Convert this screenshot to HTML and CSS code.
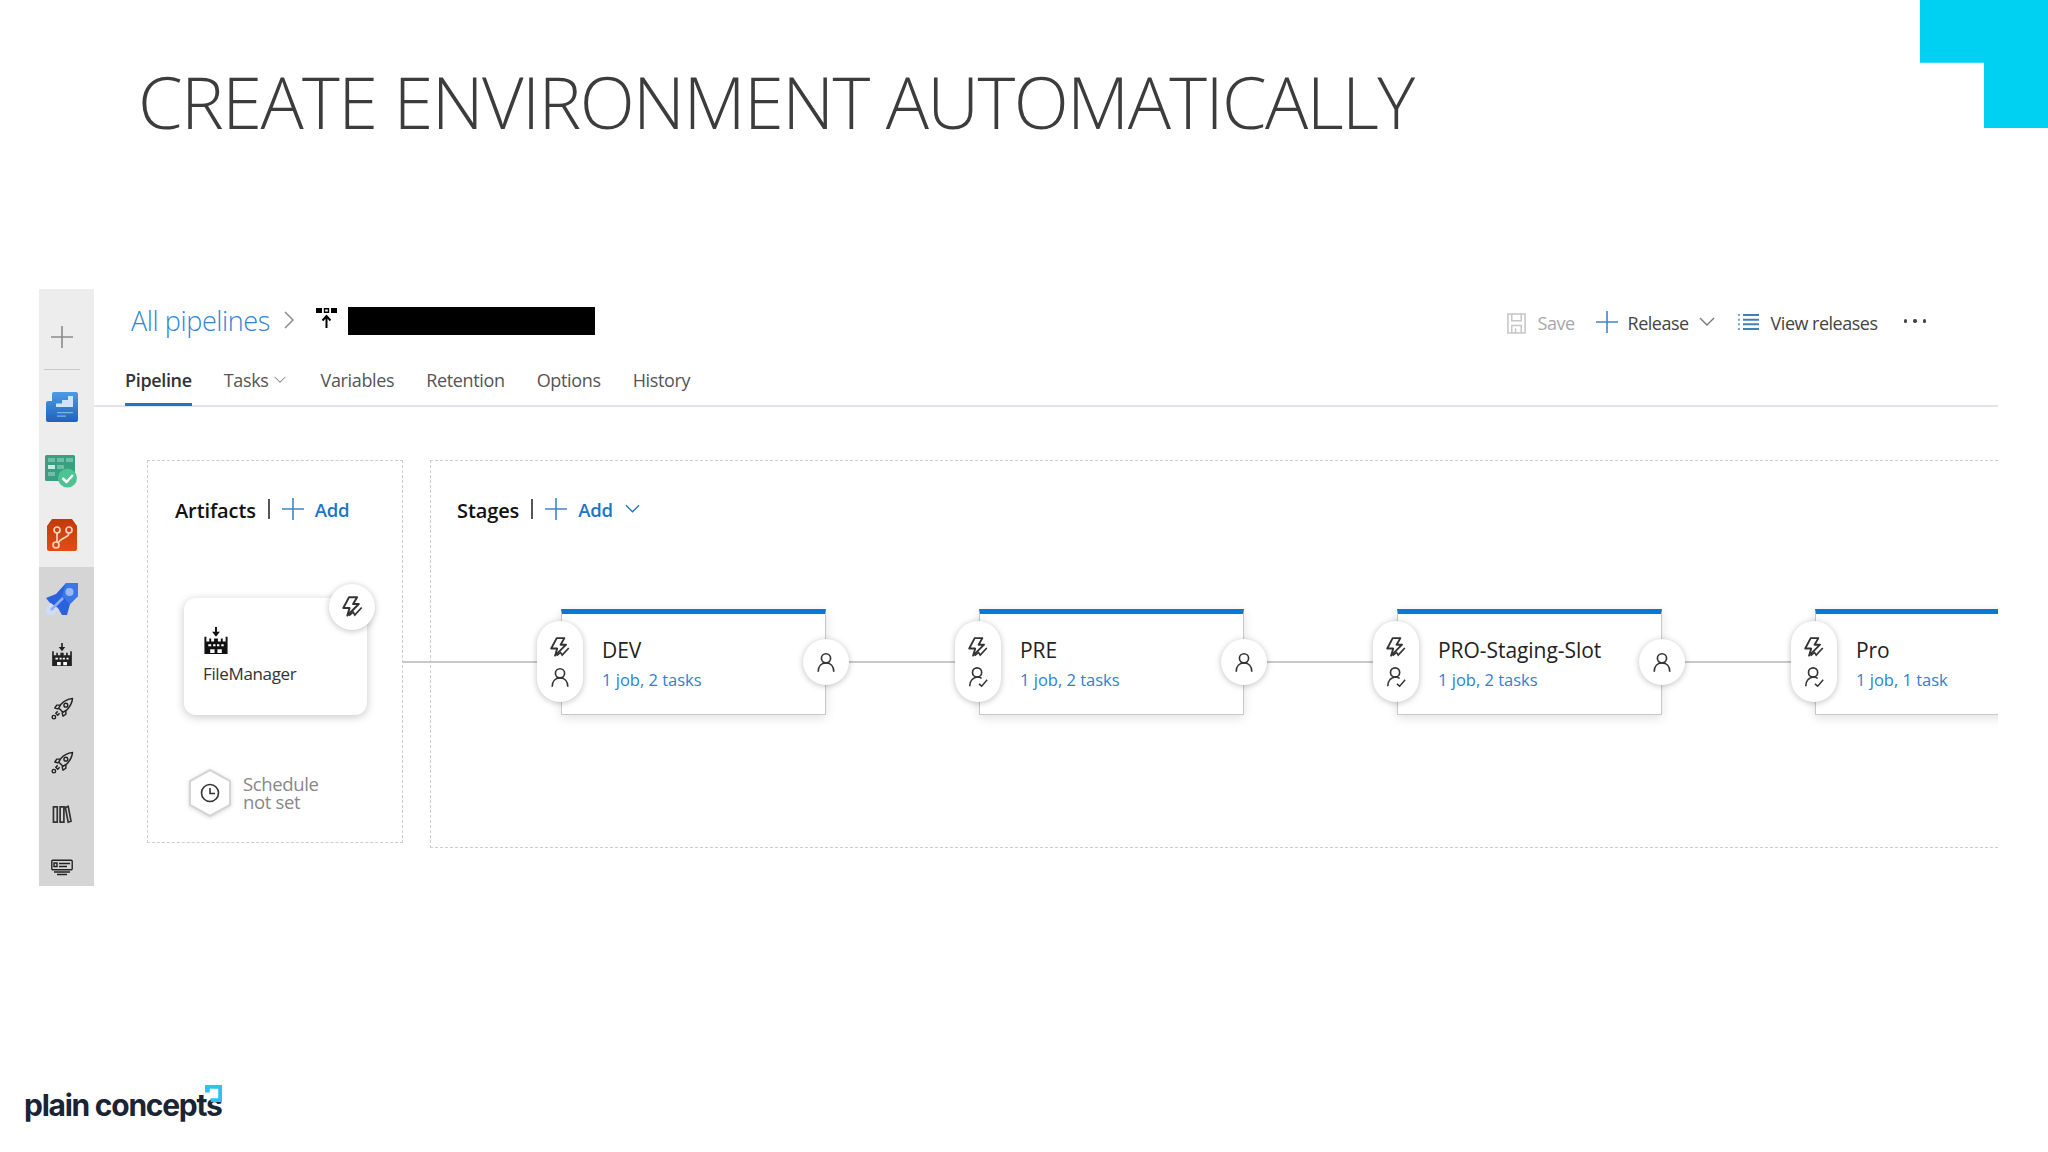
FILE: index.html
```html
<!DOCTYPE html>
<html lang="en">
<head>
<meta charset="utf-8">
<title>Create environment automatically</title>
<link rel="stylesheet" href="styles.css">
</head>
<body>
<svg class="defs" width="0" height="0" aria-hidden="true">
  <symbol id="bolt" viewBox="3.500 1 20 20"><path d="M10.500 2h7l-3.500 6h5L9 18l2-6.500H5.500z" fill="none" stroke="currentColor" stroke-width="1.700" stroke-linejoin="round"/><path d="M10.500 18l3.500-3 1.500 2.500 6-6.500" fill="none" stroke="currentColor" stroke-width="1.500"/></symbol>
  <symbol id="person" viewBox="0 0 24 24"><circle cx="12" cy="8" r="5" fill="none" stroke="currentColor" stroke-width="1.800"/><path d="M3.500 22.500c0-6 3.500-9.500 8.500-9.500s8.500 3.500 8.500 9.500" fill="none" stroke="currentColor" stroke-width="1.800"/></symbol>
  <symbol id="personcheck" viewBox="0 0 24 24"><circle cx="11" cy="7" r="5" fill="none" stroke="currentColor" stroke-width="1.800"/><path d="M3 22c0-5 2.500-9 8-10 2 0 3.500.5 5 1.500" fill="none" stroke="currentColor" stroke-width="1.800"/><path d="M13 19.500l3 2.500 6-7" fill="none" stroke="currentColor" stroke-width="1.600"/></symbol>
  <symbol id="factory" viewBox="0 0 24 28"><path d="M11 0h2v5h3l-4 5-4-5h3z" fill="currentColor"/><path d="M0 10h2v5h3v-3h2v3h3v-3h4v3h3v-3h2v3h3v-5h2v18H0z" fill="currentColor"/><path d="M4 18h3v2H4zM9 18h2.500v2H9zM13 18h2.500v2H13zM17.500 18H20v2h-2.500zM6 23h4.500v4H6zM13.500 23H18v4h-4.500z" fill="#fff"/></symbol>
  <symbol id="rocket" viewBox="0 0 24 24"><g fill="none" stroke="currentColor" stroke-width="1.500" stroke-linejoin="round"><path d="M22.500 1.500c-5 .5-9 2.500-12 6l-2.500 4 4.500 4.500 4-2.500c3.500-3.500 5.500-7.500 6-12z"/><circle cx="15.500" cy="8.500" r="2"/><path d="M9.500 8.500H6l-2 3 4 1M15.500 14.500V18l-3 2-1-4M7 15l-2 2 2 2 2-2"/><circle cx="3" cy="21" r="1.800"/></g></symbol>
  <symbol id="books" viewBox="0 0 20 20"><g fill="none" stroke="currentColor" stroke-width="1.800"><path d="M1 2h4v16H1zM8 2h4v16H8zM13.500 2.500l3-1 3 15.500-3 1z"/></g></symbol>
  <symbol id="monitor" viewBox="0 0 22 16"><g fill="none" stroke="currentColor" stroke-width="1.400"><rect x=".8" y=".8" width="20.400" height="9.500" rx="1"/><path d="M3 3.500h3v3.500H3zM8 4h11M8 7h8M3 12.500h16M6 15h10"/></g></symbol>
  <symbol id="plus" viewBox="0 0 22 22"><path d="M11 0v22M0 11h22" fill="none" stroke="currentColor" stroke-width="1.600"/></symbol>
  <symbol id="chev" viewBox="0 0 16 10"><path d="M1 1l7 7 7-7" fill="none" stroke="currentColor" stroke-width="1.400"/></symbol>
  <linearGradient id="ovgrad" x1="0" y1="0" x2="0" y2="1"><stop offset="0" stop-color="#4c9be6"/><stop offset="1" stop-color="#1f62bd"/></linearGradient>
  <linearGradient id="rpgrad" x1="0" y1="0" x2="0" y2="1"><stop offset="0" stop-color="#c23a0a"/><stop offset="1" stop-color="#e04d14"/></linearGradient>
</svg>

<div class="corner"></div>

<h1 class="title">CREATE ENVIRONMENT AUTOMATICALLY</h1>

<section class="app">
  <nav class="rail">
    <svg class="ri-plus"><use href="#plus"/></svg>
    <span class="rail-sep"></span>
    <svg class="ri-color ri-overview" viewBox="0 0 32 30"><path d="M2 9h4V2a2 2 0 0 1 2-2h22a2 2 0 0 1 2 2v26a2 2 0 0 1-2 2H2a2 2 0 0 1-2-2V11a2 2 0 0 1 2-2z" fill="url(#ovgrad)"/><path d="M10 15h17V4h-5v4h-6v3.500h-6z" fill="#cfe4f7"/><path d="M11 20h16v1.200H11zM11 23.500h9v1.200h-9z" fill="#7fb2e6"/></svg>
    <svg class="ri-color ri-boards" viewBox="0 0 32 33"><rect width="30" height="26" rx="1.500" fill="#3a9f80"/><path d="M3 3h7v4H3zM12 3h7v4h-7zM21 3h7v4h-7zM12 10h7v4h-7zM3 17h7v4H3z" fill="#6dbfa5"/><path d="M3 10h7v4H3z" fill="#c9ebdf"/><circle cx="22.500" cy="23" r="9.500" fill="#4cc492"/><path d="M17.500 23l4 4 6.500-7" fill="none" stroke="#fff" stroke-width="2.500"/></svg>
    <svg class="ri-color ri-repos" viewBox="0 0 30 32"><path d="M5 0h20l5 7v23a2 2 0 0 1-2 2H2a2 2 0 0 1-2-2V7z" fill="url(#rpgrad)"/><g fill="none" stroke="#f9d3bd" stroke-width="1.700"><circle cx="10" cy="11" r="3"/><circle cx="22" cy="11" r="3"/><circle cx="9" cy="26" r="3"/><path d="M10 14v9M22 14c0 5-8 4-11 10"/></g></svg>
    <div class="rail-active">
      <svg class="ri-color ri-pipes" viewBox="0 0 32 32"><path d="M0 15l10-4L20 0h12v13l-8 8-3 11h-5l-4-7-8-5z" fill="#2a62de"/><path d="M20 0h12v13l-8 8-8-8z" fill="#3a78ea"/><circle cx="23.500" cy="9" r="4" fill="#9cb8f2"/><path d="M0 24l5-4 7 7-5 5H2l-2-2z" fill="#d0dbf7"/><path d="M5 27l12-12" stroke="#8fadf0" stroke-width="2.500" fill="none"/></svg>
      <svg class="ri-dark ri-factory"><use href="#factory"/></svg>
      <svg class="ri-dark ri-rocket"><use href="#rocket"/></svg>
      <svg class="ri-dark ri-rocket"><use href="#rocket"/></svg>
      <svg class="ri-dark ri-books"><use href="#books"/></svg>
      <svg class="ri-dark ri-monitor"><use href="#monitor"/></svg>
    </div>
  </nav>

  <div class="main">
    <header class="top">
      <a class="crumb">All pipelines</a>
      <svg class="crumb-chev" viewBox="0 0 10 18"><path d="M1 1l8 8-8 8" fill="none" stroke="currentColor" stroke-width="1.500"/></svg>
      <svg class="crumb-icon" viewBox="0 0 21 20"><path d="M0 0h6v5H0zM15 0h6v5h-6z" fill="#000"/><path d="M8.500.7h4v3.600h-4z" fill="none" stroke="#000" stroke-width="1.400"/><path d="M10.500 20V9M6.500 12.500l4-4.500 4 4.500" fill="none" stroke="#000" stroke-width="2"/></svg>
      <span class="redacted"></span>
      <div class="actions">
        <span class="act act-save">
          <svg class="a-save" viewBox="0 0 20 22"><g fill="none" stroke="currentColor" stroke-width="1.600"><path d="M1 1h18v20H1z"/><path d="M5 1v7h10V1M5 21v-8h10v8M9 16v5"/></g></svg>
          Save
        </span>
        <span class="act act-release">
          <svg class="a-plus"><use href="#plus"/></svg>
          Release
          <svg class="a-chev"><use href="#chev"/></svg>
        </span>
        <span class="act act-view">
          <svg class="a-list" viewBox="0 0 21 16"><path d="M5 1h16M5 5.700h16M5 10.300h16M5 15h16" stroke="#3f80b8" stroke-width="2" fill="none"/><path d="M0 1h2M0 5.700h2M0 10.300h2M0 15h2" stroke="#7aa8cf" stroke-width="2" fill="none"/></svg>
          View releases
        </span>
        <span class="dots"><i></i><i></i><i></i></span>
      </div>
    </header>

    <div class="tabs">
      <span class="tab tab-on">Pipeline</span>
      <span class="tab tab-tasks">Tasks<svg class="t-chev"><use href="#chev"/></svg></span>
      <span class="tab">Variables</span>
      <span class="tab">Retention</span>
      <span class="tab">Options</span>
      <span class="tab">History</span>
    </div>

    <div class="canvas">
      <div class="panel artifacts">
        <div class="panel-head">
          <strong>Artifacts</strong><i class="bar"></i>
          <svg class="h-plus"><use href="#plus"/></svg><b class="add">Add</b>
        </div>
        <div class="art-card">
          <svg class="art-icon"><use href="#factory"/></svg>
          <span class="art-name">FileManager</span>
          <span class="trigger"><svg><use href="#bolt"/></svg></span>
        </div>
        <div class="schedule">
          <svg class="hex" viewBox="0 0 42 48"><path d="M21 1l20 11v24L21 47 1 36V12z" fill="#fff" stroke="#d4d4d4" stroke-width="2"/><circle cx="21" cy="24" r="8.500" fill="none" stroke="#333" stroke-width="1.600"/><path d="M21 19v5.500h5" fill="none" stroke="#333" stroke-width="1.600"/></svg>
          <span class="sched-text">Schedule<br>not set</span>
        </div>
      </div>

      <div class="panel stages">
        <div class="panel-head">
          <strong>Stages</strong><i class="bar"></i>
          <svg class="h-plus"><use href="#plus"/></svg><b class="add">Add</b>
          <svg class="h-chev"><use href="#chev"/></svg>
        </div>
        <div class="track">
          <i class="link link-first"></i>
          <div class="stage">
            <span class="pill"><svg><use href="#bolt"/></svg><svg><use href="#person"/></svg></span>
            <span class="stage-name">DEV</span>
            <a class="stage-sub">1 job, 2 tasks</a>
            <span class="post"><svg><use href="#person"/></svg></span>
          </div>
          <i class="link"></i>
          <div class="stage">
            <span class="pill"><svg><use href="#bolt"/></svg><svg><use href="#personcheck"/></svg></span>
            <span class="stage-name">PRE</span>
            <a class="stage-sub">1 job, 2 tasks</a>
            <span class="post"><svg><use href="#person"/></svg></span>
          </div>
          <i class="link"></i>
          <div class="stage">
            <span class="pill"><svg><use href="#bolt"/></svg><svg><use href="#personcheck"/></svg></span>
            <span class="stage-name">PRO-Staging-Slot</span>
            <a class="stage-sub">1 job, 2 tasks</a>
            <span class="post"><svg><use href="#person"/></svg></span>
          </div>
          <i class="link"></i>
          <div class="stage">
            <span class="pill"><svg><use href="#bolt"/></svg><svg><use href="#personcheck"/></svg></span>
            <span class="stage-name">Pro</span>
            <a class="stage-sub">1 job, 1 task</a>
          </div>
        </div>
      </div>
    </div>
  </div>
</section>

<footer class="brand">
  <span class="brand-name">plain concepts</span>
  <svg class="brand-mark" viewBox="0 0 18 18"><path d="M0 0h18v18H6v-4h8V4H5v4H0z" fill="#2cc4ee"/></svg>
</footer>
</body>
</html>
```
FILE: styles.css
```css
* { box-sizing: border-box; }
html, body { margin: 0; padding: 0; }
body {
  position: relative;
  width: 2048px;
  height: 1152px;
  overflow: hidden;
  background: #fff;
  color: #333;
  font-family: "Open Sans", "Noto Sans", "Liberation Sans", sans-serif;
}
svg { display: block; flex: none; }
.defs { position: absolute; }
i { font-style: normal; }

.corner {
  position: absolute;
  top: 0;
  right: 0;
  width: 128px;
  height: 128px;
  background: #00d1f2;
  clip-path: polygon(0 0, 100% 0, 100% 100%, 50% 100%, 50% 49%, 0 49%);
}

.title {
  margin: 0;
  height: 289px;
  padding: 49px 0 0 138px;
  font-size: 72px;
  line-height: 104px;
  font-weight: 300;
  color: #3c3c3c;
  letter-spacing: -1.6px;
  white-space: nowrap;
}

.app { display: flex; height: 597px; margin: 0 50px 0 39px; }

.rail {
  width: 55px;
  display: flex;
  flex-direction: column;
  align-items: center;
  padding-right: 9px;
  background: #ededed;
}
.ri-plus { width: 22px; height: 22px; margin-top: 37px; color: #8a8a8a; }
.rail-sep { width: 36px; height: 1px; margin-top: 21px; background: #c9c9c9; }
.ri-color { margin-left: -2px; }
.ri-overview { width: 32px; height: 30px; margin-top: 22px; margin-left: 0; }
.ri-boards { width: 32px; height: 33px; margin-top: 33px; }
.ri-repos { width: 30px; height: 32px; margin-top: 31px; margin-left: 0; }
.rail-active {
  flex: 1;
  align-self: stretch;
  margin: 16px -9px 0 0;
  padding-right: 9px;
  display: flex;
  flex-direction: column;
  align-items: center;
  background: #d5d5d5;
}
.ri-pipes { width: 32px; height: 32px; margin-top: 16px; margin-left: 0; }
.ri-dark { color: #222; }
.ri-factory { width: 20px; height: 23px; margin-top: 28px; }
.ri-rocket { width: 23px; height: 23px; margin-top: 31px; }
.ri-books { width: 20px; height: 19px; margin-top: 31px; color: #333; }
.ri-monitor { width: 22px; height: 17px; margin-top: 35px; }

.main { flex: 1; min-width: 0; display: flex; flex-direction: column; overflow: hidden; }

.top { display: flex; align-items: center; height: 62px; padding: 0 72px 0 37px; flex: none; }
.crumb { font-size: 27px; font-weight: 300; color: #2f86d6; letter-spacing: -.4px; }
.crumb-chev { width: 10px; height: 18px; margin-left: 14px; color: #8a8a8a; }
.crumb-icon { width: 21px; height: 20px; margin: -4px 0 0 22px; }
.redacted { width: 247px; height: 28px; margin: 2px 0 0 11px; background: #000; }
.actions { margin-left: auto; display: flex; align-items: center; font-size: 18px; letter-spacing: -.5px; margin-top: 6px; }
.act { display: flex; align-items: center; color: #444; }
.act-save { color: #a8a8a8; }
.a-save { width: 19px; height: 21px; margin-right: 12px; color: #c6c6c6; }
.act-release { margin-left: 21px; }
.a-plus { width: 22px; height: 22px; margin: -2px 10px 0 0; color: #3f86c6; }
.a-chev { width: 16px; height: 10px; margin: -2px 0 0 10px; color: #777; }
.act-view { margin-left: 23px; }
.a-list { width: 21px; height: 16px; margin: -3px 12px 0 0; }
.dots { display: flex; gap: 6px; margin: -4px 0 0 26px; }
.dots i { width: 3.500px; height: 3.500px; border-radius: 50%; background: #444; }

.tabs {
  display: flex;
  align-items: stretch;
  gap: 32px;
  height: 56px;
  flex: none;
  padding-left: 31px;
  border-bottom: 2px solid #e4e4e8;
  font-size: 18px;
  letter-spacing: -.35px;
  color: #555;
}
.tab { display: flex; align-items: center; padding-top: 4px; height: 54px; white-space: nowrap; }
.tab-on { position: relative; color: #333; font-weight: 600; }
.tab-on::after {
  content: "";
  position: absolute;
  left: 0;
  right: 0;
  bottom: -1px;
  height: 3px;
  background: #1a78c8;
}
.tab-tasks { margin-right: 3px; }
.t-chev { width: 12px; height: 8px; margin-left: 5px; color: #888; }

.canvas { flex: 1; display: flex; gap: 27px; padding: 53px 0 0 53px; overflow: hidden; }
.panel { border: 1px dashed #cdcdcd; flex: none; }
.artifacts { width: 256px; height: 383px; }
.stages { flex: 1; height: 388px; border-right: 0; min-width: 0; }
.panel-head { display: flex; align-items: center; height: 26px; margin-top: 36px; padding-left: 27px; color: #111; font-size: 20px; }
.stages .panel-head { padding-left: 26px; }
.panel-head strong { font-weight: 600; letter-spacing: -.1px; }
.bar { width: 2px; height: 20px; margin: -3px 0 0 12px; background: #555; }
.h-plus { width: 22px; height: 22px; margin: -3px 11px 0 12px; color: #3a87cc; }
.add { font-size: 18.500px; font-weight: 600; color: #1b74c8; letter-spacing: -.3px; margin-top: -2px; }
.h-chev { width: 15px; height: 10px; margin: -3px 0 0 12px; color: #1b74c8; }

.art-card {
  position: relative;
  width: 183px;
  height: 117px;
  margin: 75px 0 0 36px;
  padding: 29px 0 0 20px;
  border-radius: 12px;
  background: #fff;
  box-shadow: 0 2px 10px rgba(0, 0, 0, .22);
}
.art-icon { width: 24px; height: 27px; color: #111; }
.art-name { display: block; margin: 9px 0 0 -1px; font-size: 17px; line-height: 22px; letter-spacing: -.35px; color: #333; }
.trigger {
  position: absolute;
  top: -14px;
  right: -8px;
  width: 46px;
  height: 46px;
  border-radius: 50%;
  background: #fff;
  box-shadow: 0 1px 6px rgba(0, 0, 0, .25);
  display: flex;
  align-items: center;
  justify-content: center;
}
.trigger svg { width: 23px; height: 23px; color: #333; }

.schedule { display: flex; align-items: center; margin: 54px 0 0 41px; }
.hex { width: 42px; height: 48px; filter: drop-shadow(0 1px 2px rgba(0, 0, 0, .15)); }
.sched-text { margin: 0 0 0 12px; font-size: 18.500px; line-height: 18px; color: #888; letter-spacing: -.35px; }

.track { display: flex; height: 105px; margin: 86px 0 0 -28px; }
.link { flex: none; width: 153px; height: 2px; margin-top: 52px; background: #c9c9c9; }
.link-first { width: 158px; }
.stage {
  position: relative;
  flex: none;
  width: 265px;
  height: 106px;
  padding: 24px 0 0 40px;
  background: #fff;
  border-top: 5px solid #0a78d2;
  border-right: 1px solid #c8c8c8;
  border-bottom: 1px solid #c8c8c8;
  border-left: 1px solid #c8c8c8;
  box-shadow: 0 3px 10px rgba(0, 0, 0, .12);
}
.stage-name { display: block; font-size: 21px; line-height: 24px; color: #222; letter-spacing: -.05px; white-space: nowrap; }
.stage-sub { display: block; margin-top: 7px; font-size: 16.500px; line-height: 22px; color: #2f7fd2; letter-spacing: 0; white-space: nowrap; }
.pill {
  position: absolute;
  left: -25px;
  top: 7px;
  width: 46px;
  height: 81px;
  border-radius: 23px;
  background: #fff;
  box-shadow: 0 1px 6px rgba(0, 0, 0, .25);
  display: flex;
  flex-direction: column;
  align-items: center;
  gap: 7px;
  padding-top: 16px;
}
.pill svg { width: 22px; height: 22px; color: #333; }
.post {
  position: absolute;
  right: -24px;
  top: 25px;
  width: 46px;
  height: 46px;
  border-radius: 50%;
  background: #fff;
  box-shadow: 0 1px 6px rgba(0, 0, 0, .25);
  display: flex;
  align-items: center;
  justify-content: center;
}
.post svg { width: 22px; height: 22px; color: #333; }

.brand { position: relative; width: 220px; height: 60px; margin: 198px 0 0 24px; }
.brand-name {
  display: block;
  padding-top: 2px;
  font-family: "Inter", "Lato", sans-serif;
  font-size: 30px;
  line-height: 38px;
  font-weight: 700;
  letter-spacing: -1.25px;
  color: #1a2433;
  white-space: nowrap;
}
.brand-mark { position: absolute; left: 181px; top: 1px; width: 17px; height: 17px; }
```
